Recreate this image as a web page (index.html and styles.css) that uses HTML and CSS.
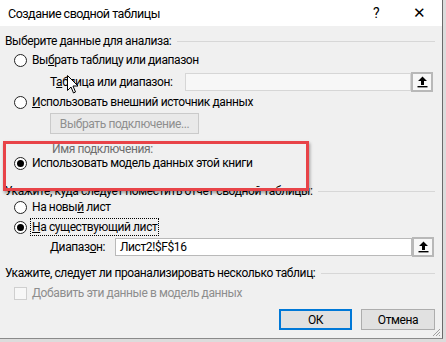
FILE: index.html
```html
<!DOCTYPE html>
<html lang="ru">
  <head>
    <meta charset="UTF-8" />
    <title>Создание сводной таблицы</title>
    <link rel="stylesheet" href="styles.css">
  </head>
  <body>
    <div class="dialog">
      <div class="titlebar">
        <span class="title">Создание сводной таблицы</span>
        <span class="help">?</span>
        <span class="close">✕</span>
      </div>
      <div class="content">
        <div class="heading h-first">
          <span>Выберите данные для анализа:</span>
          <span class="rule"></span>
        </div>
        <div class="option opt-1">
          <span class="radio"></span>
          <span>Вы<u>б</u>рать таблицу или диапазон</span>
        </div>
        <div class="field field-1">
          <span class="field-label">Т<u>а</u>блица или диапазон:</span>
          <span class="input input-short"></span>
          <span class="pick">
            <svg width="11" height="12" viewBox="0 0 11 12"><path d="M5.5 0.5 L10 5 L7 5 L7 9 L4 9 L4 5 L1 5 Z" fill="#000"/><rect x="0.5" y="10" width="10" height="1.4" fill="#000"/></svg>
          </span>
        </div>
        <div class="option opt-2">
          <span class="radio"></span>
          <span><u>И</u>спользовать внешний источник данных</span>
        </div>
        <div class="conn-row">
          <span class="btn-disabled">Выбрать подключение...</span>
        </div>
        <div class="conn-name">Имя подключения:</div>
        <div class="option opt-3">
          <span class="radio checked"></span>
          <span>Использовать модель данных этой книги</span>
        </div>
        <div class="heading h-second">
          <span>Укажите, куда следует поместить отчет сводной таблицы:</span>
          <span class="rule"></span>
        </div>
        <div class="option opt-4">
          <span class="radio"></span>
          <span>На новы<u>й</u> лист</span>
        </div>
        <div class="option opt-5">
          <span class="radio checked"></span>
          <span class="focused"><u>Н</u>а существующий лист</span>
        </div>
        <div class="field field-2">
          <span class="field-label">Диапаз<u>о</u>н:</span>
          <span class="input input-long">Лист2!$F$16</span>
          <span class="pick">
            <svg width="11" height="12" viewBox="0 0 11 12"><path d="M5.5 0.5 L10 5 L7 5 L7 9 L4 9 L4 5 L1 5 Z" fill="#000"/><rect x="0.5" y="10" width="10" height="1.4" fill="#000"/></svg>
          </span>
        </div>
        <div class="heading h-third">
          <span>Укажите, следует ли проанализировать несколько таблиц:</span>
          <span class="rule"></span>
        </div>
        <div class="option opt-6 disabled">
          <span class="checkbox"></span>
          <span>Добавить эти данные в модель данных</span>
        </div>
        <div class="buttons">
          <span class="btn btn-default">ОК</span>
          <span class="btn">Отмена</span>
        </div>
      </div>
      <div class="highlight"></div>
      <svg class="cursor" width="12" height="19" viewBox="0 0 12 19"><path d="M0.5 0.5 L0.5 15.5 L4 12 L6.5 18 L8.5 17 L6 11 L11 11 Z" fill="#fff" stroke="#000" stroke-width="1"/></svg>
      <svg class="grip" width="10" height="10" viewBox="0 0 10 10"><path d="M9 2 L2 9 M9 5 L5 9 M9 8 L8 9" stroke="#a0a0a0" stroke-width="1"/></svg>
    </div>
  </body>
</html>
```

FILE: styles.css
```css
html {
  height: 100%;
}
body {
  margin: 0;
  height: 100%;
  background: #dcdcdc;
  font-family: Roboto, "Noto Sans", sans-serif;
  font-size: 12px;
  letter-spacing: -0.4px;
  color: #000;
  overflow: hidden;
  white-space: nowrap;
}

.dialog {
  position: relative;
  width: 442px;
  height: 338px;
  background: #f0f0f0;
  border-right: 1px solid #6a6a6a;
  border-bottom: 1px solid #8a8a8a;
}

.titlebar {
  height: 26px;
  background: #fff;
  display: flex;
  align-items: center;
  padding-left: 8px;
}
.title {
  flex: 1;
  font-size: 12.5px;
  letter-spacing: -0.5px;
}
.help {
  font-size: 14px;
  width: 20px;
  margin-right: 20px;
}
.close {
  font-size: 15px;
  width: 29px;
}

.content {
  padding: 0 7px 0 5px;
  display: flex;
  flex-direction: column;
}

.heading {
  height: 16px;
  display: flex;
  align-items: center;
  gap: 6px;
}
.rule {
  flex: 1;
  height: 1px;
  background: #d7d7d7;
}
.h-first { margin-top: 7px; }
.h-second { margin-top: 12px; }
.h-third { margin-top: 8px; }

.option {
  height: 16px;
  display: flex;
  align-items: center;
  gap: 5px;
  padding-left: 9px;
}
.opt-1 { margin-top: 3px; }
.opt-2 { margin-top: 2px; }
.opt-3 { margin-top: -1px; }
.opt-4 { margin-top: 0; }
.opt-5 { margin-top: 4px; }
.opt-6 { margin-top: 4px; }

.radio {
  box-sizing: border-box;
  width: 13px;
  height: 13px;
  border: 1px solid #222;
  border-radius: 50%;
  background: #fff;
  display: flex;
  align-items: center;
  justify-content: center;
}
.radio.checked::after {
  content: "";
  width: 7px;
  height: 7px;
  border-radius: 50%;
  background: #000;
}
.checkbox {
  box-sizing: border-box;
  width: 13px;
  height: 13px;
  border: 1px solid #cfcfcf;
  background: #f7f7f7;
}
.disabled {
  color: #8d8d8d;
}
.focused {
  outline: 1px dotted #000;
  outline-offset: 1px;
}

.field {
  height: 20px;
  display: flex;
  align-items: center;
  padding-left: 45px;
}
.field-1 { margin-top: 4px; }
.field-2 { margin-top: 2px; }
.field-label {
  width: 135px;
}
.field-2 .field-label {
  width: 65px;
}
.input {
  box-sizing: border-box;
  height: 18px;
  border: 1px solid #b9b9b9;
  display: flex;
  align-items: center;
  padding-left: 4px;
}
.input-short {
  width: 226px;
  background: #f7f7f7;
  border-color: #d6d6d6;
}
.input-long {
  width: 297px;
  background: #fff;
}
.pick {
  box-sizing: border-box;
  width: 22px;
  height: 20px;
  border: 2px solid #b8b8b8;
  background: #f7f7f7;
  display: flex;
  align-items: center;
  justify-content: center;
}

.conn-row {
  margin-top: 3px;
  padding-left: 45px;
  display: flex;
}
.btn-disabled {
  box-sizing: border-box;
  height: 21px;
  width: 149px;
  border: 1px solid #cacaca;
  background: #e9e9e9;
  color: #8f8f8f;
  display: flex;
  align-items: center;
  justify-content: center;
}
.conn-name {
  margin-top: 8px;
  padding-left: 47px;
  height: 14px;
  display: flex;
  align-items: center;
  color: #6d6d6d;
}

.buttons {
  margin-top: 8px;
  display: flex;
  justify-content: flex-end;
  gap: 9px;
}
.btn {
  box-sizing: border-box;
  width: 74px;
  height: 21px;
  border: 1px solid #adadad;
  background: #e1e1e1;
  display: flex;
  align-items: center;
  justify-content: center;
}
.btn-default {
  border: 2px solid #0078d7;
  width: 73px;
}

.highlight {
  position: absolute;
  left: 3px;
  top: 141px;
  width: 306px;
  height: 50px;
  box-sizing: border-box;
  border: 3px solid #e84348;
  box-shadow: 1px 2px 3px rgba(0, 0, 0, 0.35);
}
.cursor {
  position: absolute;
  left: 67px;
  top: 75px;
}
.grip {
  position: absolute;
  right: 1px;
  bottom: 1px;
}
```
